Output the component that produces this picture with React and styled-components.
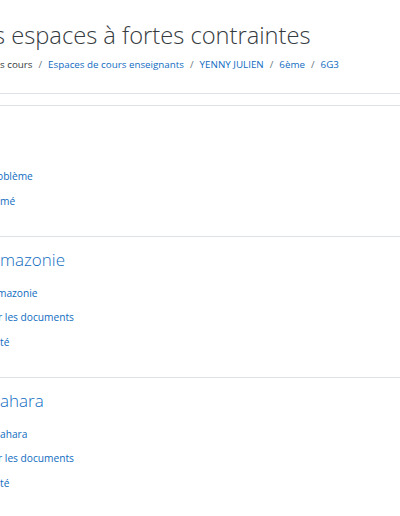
import styled, { createGlobalStyle } from 'styled-components';

const GlobalStyle = createGlobalStyle`
  html, body {
    margin: 0;
    padding: 0;
    background: #fff;
  }
  body {
    font-family: "Open Sans", "Noto Sans", "Liberation Sans", sans-serif;
    color: #373a3c;
    overflow: hidden;
  }
`;

const crumbs = [
  { label: 's cours', link: false },
  { label: 'Espaces de cours enseignants', link: true },
  { label: 'YENNY JULIEN', link: true },
  { label: '6ème', link: true },
  { label: '6G3', link: true },
];

const sections = [
  { title: '', lead: 14, items: [{ text: 'oblème', cut: 3 }, { text: 'mé', cut: 0 }] },
  {
    title: 'mazonie',
    items: [{ text: 'mazonie', cut: 3 }, { text: 'r les documents', cut: 2 }, { text: 'té', cut: 0 }],
  },
  {
    title: 'ahara',
    items: [{ text: 'ahara', cut: 0 }, { text: 'r les documents', cut: 2 }, { text: 'té', cut: 0 }],
  },
];

export default function App() {
  return (
    <>
      <GlobalStyle />
      <Page>
        <Header>
          <Title>s espaces à fortes contraintes</Title>
          <Breadcrumb>
            {crumbs.map((c, i) => (
              <Crumb key={i} $link={c.link} $first={i === 0}>
                {c.label}
              </Crumb>
            ))}
          </Breadcrumb>
        </Header>

        <Sections>
          {sections.map((s, i) => (
            <Section key={i} $lead={s.lead || 0}>
              <SectionName>{s.title}</SectionName>
              <Activities>
                {s.items.map((a, j) => (
                  <Activity key={j} $cut={a.cut}>
                    <a href="#">{a.text}</a>
                  </Activity>
                ))}
              </Activities>
            </Section>
          ))}
        </Sections>
      </Page>
    </>
  );
}

const Page = styled.div`
  width: 400px;
  height: 516px;
  overflow: hidden;
`;

const Header = styled.header`
  padding-top: 20px;
  height: 94px;
  box-sizing: border-box;
  border-bottom: 1px solid #dee2e6;
`;

const Title = styled.h1`
  margin: 0 0 0 -6px;
  font-size: 23.7px;
  line-height: 30px;
  font-weight: 300;
  color: #343a40;
  white-space: nowrap;
`;

const Breadcrumb = styled.ol`
  display: flex;
  list-style: none;
  margin: 5px 0 0;
  padding: 0;
  font-size: 9.8px;
  line-height: 20px;
  white-space: nowrap;
`;

const Crumb = styled.li`
  color: ${(p) => (p.$link ? '#0f6cbf' : '#343a40')};

  &::before {
    content: ${(p) => (p.$first ? 'none' : '"/"')};
    color: #6c757d;
    padding: 0 6px;
  }
`;

const Sections = styled.ul`
  list-style: none;
  margin: 11px 0 0;
  padding: 0;
  border-top: 1px solid #dee2e6;
`;

const Section = styled.li`
  padding: ${(p) => 11 + p.$lead}px 0 22.5px;
  border-bottom: 1px solid #dee2e6;
`;

const SectionName = styled.h3`
  margin: 0;
  height: 24px;
  font-size: 17px;
  line-height: 24px;
  font-weight: 300;
  color: #0f6cbf;
  white-space: nowrap;
`;

const Activities = styled.ul`
  list-style: none;
  margin: 9px 0 0;
  padding: 0;
`;

const Activity = styled.li`
  height: 24.5px;
  line-height: 24.5px;
  font-size: 10.2px;
  white-space: nowrap;
  margin-left: ${(p) => -p.$cut}px;

  a {
    color: #0f6cbf;
    text-decoration: none;
  }
`;
